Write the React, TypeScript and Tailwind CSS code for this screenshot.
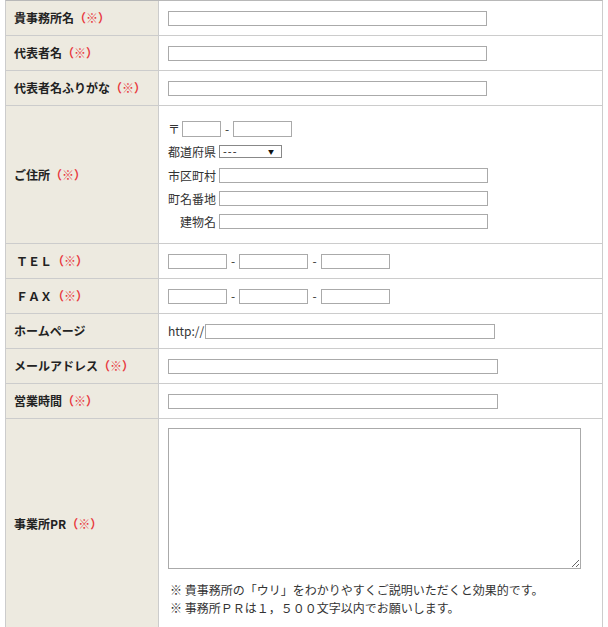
import React from 'react';

const font = { fontFamily: '"Noto Sans CJK JP", "Noto Sans", sans-serif' };

const Req = () => <span className="text-[#e8383d]">（※）</span>;

const Field = ({ w, h = 'h-[15px]' }: { w: string; h?: string }) => (
  <input type="text" className={`${w} ${h} border border-[#aaa] bg-white px-1 text-[12px] outline-none`} />
);

const Dash = ({ w = 'w-[12px]' }: { w?: string }) => (
  <span className={`${w} text-center leading-none`}>-</span>
);

const Row = ({
  label,
  children,
  h = 'h-[34px]',
}: {
  label: React.ReactNode;
  children: React.ReactNode;
  h?: string;
}) => (
  <div className="flex border-b border-[#ccc]">
    <div className="flex w-[153px] shrink-0 items-center border-r border-[#ccc] bg-[#edeae0] pl-2 text-[12px] font-bold text-[#222]">
      {label}
    </div>
    <div className={`flex flex-1 items-center pl-[9px] text-[12px] text-[#333] ${h}`}>{children}</div>
  </div>
);

const AddrLine = ({ label, children, h }: { label: string; children: React.ReactNode; h: string }) => (
  <div className={`flex items-center ${h}`}>
    <span className="w-12 text-right leading-none">{label}</span>
    <span className="ml-[3px] flex items-center">{children}</span>
  </div>
);

export default function App() {
  return (
    <div className="min-h-[627px] bg-white" style={font}>
      <div className="ml-[5px] w-[598px] border-l border-r border-t border-[#ccc] border-t-[#b8b8b8]">
        <Row label={<>貴事務所名<Req /></>}>
          <Field w="w-[319px]" />
        </Row>
        <Row label={<>代表者名<Req /></>}>
          <Field w="w-[319px]" />
        </Row>
        <Row label={<>代表者名ふりがな<Req /></>}>
          <Field w="w-[319px]" />
        </Row>

        <div className="flex border-b border-[#ccc]">
          <div className="flex w-[153px] shrink-0 items-center border-r border-[#ccc] bg-[#edeae0] pl-2 text-[12px] font-bold text-[#222]">
            ご住所<Req />
          </div>
          <div className="flex flex-1 flex-col pb-[14px] pl-[9px] pt-[15px] text-[12px] text-[#333]">
            <div className="flex h-[16px] items-center">
              <span className="w-3 leading-none">〒</span>
              <span className="ml-[2px]">
                <Field w="w-[39px]" h="h-[16px]" />
              </span>
              <Dash />
              <Field w="w-[59px]" h="h-[16px]" />
            </div>
            <div className="mt-[8px]">
              <AddrLine label="都道府県" h="h-[13px]">
                <span className="flex h-[13px] w-[63px] items-center justify-between border border-[#888] bg-white pl-[3px] pr-[7px] text-[11px] leading-none text-[#111]">
                  <span className="tracking-[1px]">---</span>
                  <span className="text-[6px]">▼</span>
                </span>
              </AddrLine>
            </div>
            <div className="mt-[10px]">
              <AddrLine label="市区町村" h="h-[15px]">
                <Field w="w-[269px]" />
              </AddrLine>
            </div>
            <div className="mt-[8px]">
              <AddrLine label="町名番地" h="h-[15px]">
                <Field w="w-[269px]" />
              </AddrLine>
            </div>
            <div className="mt-[8px]">
              <AddrLine label="建物名" h="h-[15px]">
                <Field w="w-[269px]" />
              </AddrLine>
            </div>
          </div>
        </div>

        <Row label={<><span className="ml-[2px]">ＴＥＬ</span><Req /></>}>
          <Field w="w-[59px]" />
          <Dash />
          <Field w="w-[69px]" />
          <Dash w="w-[13px]" />
          <Field w="w-[69px]" />
        </Row>
        <Row label={<><span className="ml-[2px]">ＦＡＸ</span><Req /></>}>
          <Field w="w-[59px]" />
          <Dash />
          <Field w="w-[69px]" />
          <Dash w="w-[13px]" />
          <Field w="w-[69px]" />
        </Row>
        <Row label="ホームページ">
          <span className="w-[37px] whitespace-nowrap leading-none">http://</span>
          <Field w="w-[290px]" />
        </Row>
        <Row label={<>メールアドレス<Req /></>}>
          <Field w="w-[330px]" />
        </Row>
        <Row label={<>営業時間<Req /></>}>
          <Field w="w-[330px]" />
        </Row>

        <div className="flex border-b border-[#ccc]">
          <div className="flex w-[153px] shrink-0 items-center border-r border-[#ccc] bg-[#edeae0] pl-2 text-[12px] font-bold text-[#222]">
            事業所PR<Req />
          </div>
          <div className="flex flex-1 flex-col pb-3 pl-[9px] pt-[9px] text-[12px] text-[#333]">
            <textarea className="block h-[141px] w-[413px] border border-[#aaa] bg-white p-1 outline-none" />
            <div className="mt-[12px] pl-[2px] leading-[18px]">
              <p>※ 貴事務所の「ウリ」をわかりやすくご説明いただくと効果的です。</p>
              <p>※ 事務所ＰＲは１，５００文字以内でお願いします。</p>
            </div>
          </div>
        </div>
      </div>
    </div>
  );
}
